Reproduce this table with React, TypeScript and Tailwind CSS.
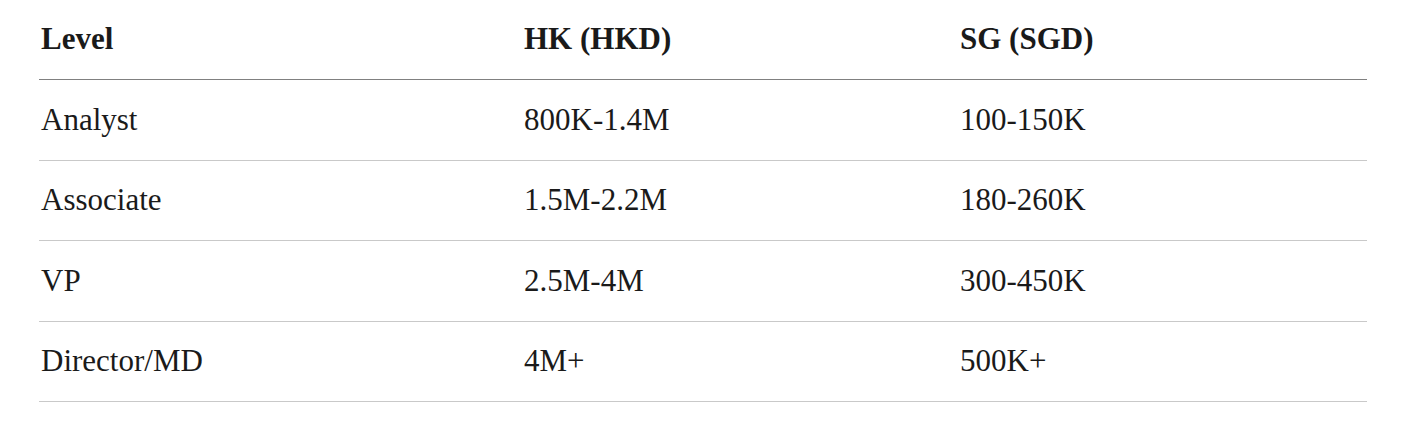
const rows = [
  { level: "Analyst", hk: "800K-1.4M", sg: "100-150K" },
  { level: "Associate", hk: "1.5M-2.2M", sg: "180-260K" },
  { level: "VP", hk: "2.5M-4M", sg: "300-450K" },
  { level: "Director/MD", hk: "4M+", sg: "500K+" },
]

export default function App() {
  return (
    <div className="min-h-[422px] bg-white pl-[39px] font-['Liberation_Serif',serif] text-[31px] text-[#1a1a1a]">
      <div className="w-[1328px]">
        <div className="grid h-[80px] grid-cols-[483px_436px_1fr] items-center border-b border-[#808080] pl-[2px] font-bold">
          <div>Level</div>
          <div>HK (HKD)</div>
          <div>SG (SGD)</div>
        </div>
        {rows.map((row, index) => (
          <div
            className={`grid grid-cols-[483px_436px_1fr] items-center border-b border-[#c9c9c9] pl-[2px] ${
              index % 2 === 0 ? "h-[81px]" : "h-[80px]"
            }`}
            key={row.level}
          >
            <div>{row.level}</div>
            <div>{row.hk}</div>
            <div>{row.sg}</div>
          </div>
        ))}
      </div>
    </div>
  )
}
